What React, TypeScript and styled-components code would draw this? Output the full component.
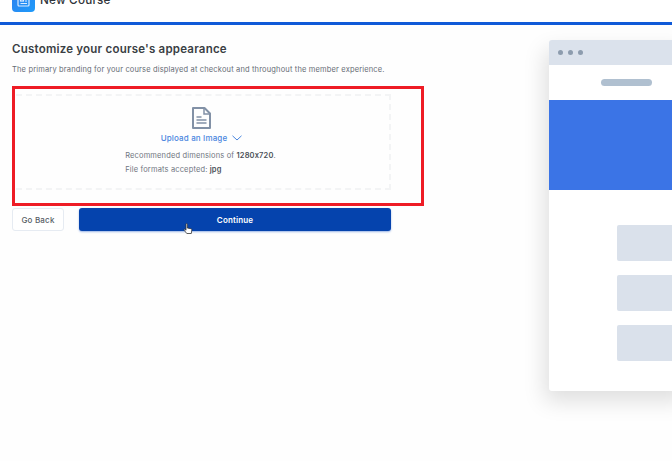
import React from "react";
import styled, { createGlobalStyle } from "styled-components";

const Global = createGlobalStyle`
  html, body { margin: 0; padding: 0; background: #fefefe; overflow: hidden; }
  body { width: 672px; height: 461px; font-family: Inter, "Liberation Sans", sans-serif; }
`;
const Page = styled.div`
  width: 672px; height: 461px; display: flex; flex-direction: column; overflow: hidden; position: relative;
`;
const TopBar = styled.header`
  height: 25px; flex: none; box-sizing: border-box; border-bottom: 3px solid #0f5ad8; background: #fff;
  padding: 0 12px; display: flex; align-items: flex-end; gap: 5px; overflow: hidden;
`;
const LogoTile = styled.div`
  width: 23px; height: 23px; flex: none; margin-bottom: 10px; border-radius: 4px;
  background: linear-gradient(135deg, #2f7fee, #1f9bfa); display: flex; align-items: center; justify-content: center;
`;
const TopTitle = styled.div`
  font-size: 11.7px; font-weight: 500; color: #30343a; line-height: 16px; margin-bottom: 14px; letter-spacing: .2px;
`;
const Body = styled.div`
  flex: 1; display: flex; padding: 0 0 0 12px; min-height: 0;
`;
const Main = styled.main`
  width: 380px; flex: none; padding-top: 17px; display: flex; flex-direction: column;
`;
const Heading = styled.h1`
  margin: 0; font-size: 11.5px; line-height: 14px; font-weight: 600; color: #3a3e44; letter-spacing: .22px; white-space: nowrap;
`;
const Lead = styled.p`
  margin: 8px 0 0; font-size: 7.5px; line-height: 11px; color: #666c75; white-space: nowrap; letter-spacing: .157px;
`;
const Drop = styled.div`
  width: 375px; height: 96px; box-sizing: border-box; margin: 19px 0 0 4px;
  border: 2px dashed #f3f4f5; border-left: 0;
  display: flex; flex-direction: column; align-items: center; padding: 11px 2px 0 0;
`;
const UploadRow = styled.div`
  display: flex; align-items: center; gap: 5px; margin-top: 2px; height: 14px;
  font-size: 8px; font-weight: 500; color: #4a86de; letter-spacing: .15px;
`;
const HintStack = styled.div`
  display: flex; flex-direction: column; align-items: flex-start; gap: 3px; margin: 5px 2px 0 0;
`;
const Hint = styled.div`
  font-size: 7.5px; line-height: 11px; color: #6f757e; letter-spacing: .15px;
  b { font-weight: 600; color: #4c5158; }
`;
const Actions = styled.div`
  display: flex; gap: 15px; margin-top: 18px; height: 23px;
`;
const BackButton = styled.button`
  width: 52px; box-sizing: border-box; background: #fff; border: 1px solid #e6ebf2; border-radius: 3px;
  font: 500 8px Inter, sans-serif; color: #585e66; padding: 0; letter-spacing: .2px;
`;
const ContinueButton = styled.button`
  width: 312px; background: #0543ad; border: 0; border-radius: 3px; color: #fff; padding: 0;
  font: 600 8px Inter, sans-serif; letter-spacing: .15px; box-shadow: 0 1px 2px rgba(30,90,200,.45);
`;
const Highlight = styled.div`
  position: absolute; left: 12px; top: 86px; width: 412px; height: 120px; box-sizing: border-box; border: 3px solid #ee1c25;
`;
const Cursor = styled.svg`
  position: absolute; left: 183px; top: 223px; width: 10px; height: 12px;
`;
const Preview = styled.aside`
  margin: 15px 0 0 157px; width: 140px; height: 351px; flex: none; background: #fff; border-radius: 3px 0 0 3px;
  box-shadow: -4px 10px 22px rgba(0,0,0,.13); display: flex; flex-direction: column;
`;
const PreviewBar = styled.div`
  height: 25px; background: #dbe2ec; border-radius: 3px 0 0 0; display: flex; align-items: center; gap: 5px; padding-left: 9px;
`;
const Dot = styled.span`
  width: 5px; height: 5px; border-radius: 50%; background: #8d9cae;
`;
const PreviewNav = styled.div`
  height: 35px; display: flex; align-items: center; padding-left: 52px; box-sizing: border-box;
`;
const Pill = styled.div`
  width: 51px; height: 7px; border-radius: 4px; background: #b0c0d0;
`;
const Banner = styled.div`
  height: 90px; background: #3b74e6;
`;
const CardStack = styled.div`
  display: flex; flex-direction: column; gap: 14px; padding: 35px 0 0 68px;
`;
const Card = styled.div`
  height: 36px; border-radius: 2px 0 0 2px; background: #dae1eb;
`;

export default function App() {
  return (
    <Page>
      <Global />
      <TopBar>
        <LogoTile>
          <svg width="13" height="13" viewBox="0 0 13 13" fill="none" stroke="#dcecff" strokeWidth="1.2">
            <rect x="1" y="1" width="11" height="11" rx="1" />
            <rect x="3.5" y="4" width="3" height="3" />
            <path d="M8 4.5h2M8 7h2M3.5 9.5h6.5" />
          </svg>
        </LogoTile>
        <TopTitle>New Course</TopTitle>
      </TopBar>
      <Body>
        <Main>
          <Heading>Customize your course's appearance</Heading>
          <Lead>The primary branding for your course displayed at checkout and throughout the member experience.</Lead>
          <Drop>
            <svg width="19" height="22" viewBox="0 0 19 22" fill="none" stroke="#8291a6" strokeWidth="2">
              <path d="M1 1h11.5L18 6.5V21H1z" strokeLinejoin="round" />
              <path d="M12 1v6h6" strokeWidth="1.5" />
              <path d="M4.5 10h5M4.5 13h10M4.5 16h10" strokeWidth="1.5" />
            </svg>
            <UploadRow>
              Upload an Image
              <svg width="10" height="6" viewBox="0 0 10 6" fill="none" stroke="#4a86de" strokeWidth="1">
                <path d="M.5.8 5 5 9.5.8" />
              </svg>
            </UploadRow>
            <HintStack>
              <Hint>Recommended dimensions of <b>1280x720</b>.</Hint>
              <Hint>File formats accepted: <b>jpg</b></Hint>
            </HintStack>
          </Drop>
          <Actions>
            <BackButton>Go Back</BackButton>
            <ContinueButton>Continue</ContinueButton>
          </Actions>
        </Main>
        <Preview>
          <PreviewBar><Dot /><Dot /><Dot /></PreviewBar>
          <PreviewNav><Pill /></PreviewNav>
          <Banner />
          <CardStack><Card /><Card /><Card /></CardStack>
        </Preview>
      </Body>
      <Highlight />
      <Cursor viewBox="0 0 10 12">
        <path d="M3 1.2c0-.8 1.3-.8 1.3 0V5l3.6.7c.8.2 1 .7.9 1.4L8.3 10.5H3.8L1.2 7.3c-.5-.8.4-1.4 1-.8L3 7.3z" fill="#fff" stroke="#333" strokeWidth=".8" />
      </Cursor>
    </Page>
  );
}
